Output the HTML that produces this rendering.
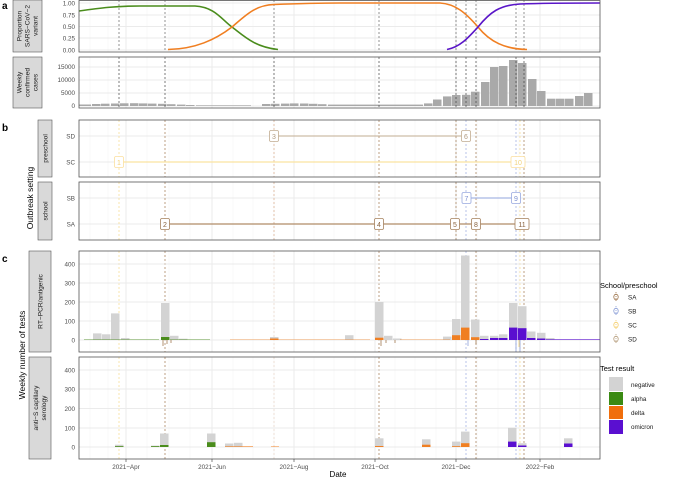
<!DOCTYPE html>
<html><head><meta charset="utf-8"><style>
html,body{margin:0;padding:0;background:#fff;width:685px;height:479px;overflow:hidden}
svg{display:block;font-family:"Liberation Sans",sans-serif}
</style></head><body>
<svg width="685" height="479" viewBox="0 0 685 479" xmlns="http://www.w3.org/2000/svg">
<defs>
<g id="vgrid">
<g stroke="#ebebeb" stroke-width="1">
<line x1="126" x2="126" y1="-1000" y2="1000"/><line x1="212" x2="212" y1="-1000" y2="1000"/><line x1="294" x2="294" y1="-1000" y2="1000"/><line x1="375" x2="375" y1="-1000" y2="1000"/><line x1="456" x2="456" y1="-1000" y2="1000"/><line x1="540" x2="540" y1="-1000" y2="1000"/>
</g>
<g stroke="#f4f4f4" stroke-width="0.6">
<line x1="90" x2="90" y1="-1000" y2="1000"/><line x1="108" x2="108" y1="-1000" y2="1000"/><line x1="147" x2="147" y1="-1000" y2="1000"/><line x1="169" x2="169" y1="-1000" y2="1000"/><line x1="190" x2="190" y1="-1000" y2="1000"/><line x1="233" x2="233" y1="-1000" y2="1000"/><line x1="253" x2="253" y1="-1000" y2="1000"/><line x1="274" x2="274" y1="-1000" y2="1000"/><line x1="314" x2="314" y1="-1000" y2="1000"/><line x1="334" x2="334" y1="-1000" y2="1000"/><line x1="355" x2="355" y1="-1000" y2="1000"/><line x1="395" x2="395" y1="-1000" y2="1000"/><line x1="415" x2="415" y1="-1000" y2="1000"/><line x1="436" x2="436" y1="-1000" y2="1000"/><line x1="477" x2="477" y1="-1000" y2="1000"/><line x1="498" x2="498" y1="-1000" y2="1000"/><line x1="519" x2="519" y1="-1000" y2="1000"/><line x1="560" x2="560" y1="-1000" y2="1000"/><line x1="580" x2="580" y1="-1000" y2="1000"/>
</g>
</g>
<clipPath id="ca1"><rect x="79" y="0" width="521" height="52"/></clipPath>
<clipPath id="ca2"><rect x="79" y="57" width="521" height="51"/></clipPath>
<clipPath id="cb1"><rect x="79" y="120" width="521" height="57"/></clipPath>
<clipPath id="cb2"><rect x="79" y="182" width="521" height="58"/></clipPath>
<clipPath id="cc1"><rect x="79" y="251" width="521" height="101"/></clipPath>
<clipPath id="cc2"><rect x="79" y="357" width="521" height="102"/></clipPath>
</defs>

<g font-weight="bold" font-size="10" fill="#000">
<text x="2" y="9">a</text><text x="2" y="131">b</text><text x="2" y="262">c</text>
</g>

<g clip-path="url(#ca1)"><use href="#vgrid"/>
<g stroke="#ebebeb"><line x1="79" x2="600" y1="3" y2="3"/><line x1="79" x2="600" y1="15" y2="15"/><line x1="79" x2="600" y1="26.5" y2="26.5"/><line x1="79" x2="600" y1="38" y2="38"/><line x1="79" x2="600" y1="50" y2="50"/></g>
<g stroke="#666" stroke-width="0.7" stroke-dasharray="2,2">
<line x1="119" x2="119" y1="0" y2="52"/><line x1="165" x2="165" y1="0" y2="52"/><line x1="274" x2="274" y1="0" y2="52"/><line x1="379" x2="379" y1="0" y2="52"/><line x1="456" x2="456" y1="0" y2="52"/><line x1="466" x2="466" y1="0" y2="52"/><line x1="476" x2="476" y1="0" y2="52"/><line x1="516" x2="516" y1="0" y2="52"/><line x1="524" x2="524" y1="0" y2="52"/></g>
<g fill="none" stroke-width="1.6">
<path d="M79,11 C100,8 115,6 140,6 L195,6 C215,7 222,20 232,27 C245,37 255,47 278,49.5" stroke="#4a8c1c"/>
<path d="M168,49.5 C195,49 215,40 232,27 C245,16 255,5 274,4.5 C300,3.5 320,3 340,3 L440,3 C455,4 465,12 478,27 C490,42 505,49 527,49.5" stroke="#f07f22"/>
<path d="M447,49.5 C460,47 468,38 478,27 C490,12 500,5 520,4 C545,3 570,3 600,3" stroke="#5a16c8"/>
</g></g>
<rect x="79" y="0.5" width="521" height="51.5" fill="none" stroke="#555" stroke-width="0.8"/>
<g font-size="6.3" fill="#4d4d4d" text-anchor="end">
<text x="75" y="5.5">1.00</text><text x="75" y="17.5">0.75</text><text x="75" y="29">0.50</text><text x="75" y="40.5">0.25</text><text x="75" y="52.5">0.00</text>
<text x="75" y="69">15000</text><text x="75" y="82">10000</text><text x="75" y="95">5000</text><text x="75" y="108">0</text>
</g>
<rect x="13" y="0" width="29" height="52" fill="#d9d9d9" stroke="#555" stroke-width="0.6"/>
<text transform="translate(27.5,26) rotate(-90)" font-size="6.6" fill="#1a1a1a" text-anchor="middle"><tspan x="0" y="-6">Proportion</tspan><tspan x="0" y="2">SARS−CoV−2</tspan><tspan x="0" y="10">variant</tspan></text>

<g clip-path="url(#ca2)"><use href="#vgrid"/>
<g stroke="#ebebeb"><line x1="79" x2="600" y1="67" y2="67"/><line x1="79" x2="600" y1="80" y2="80"/><line x1="79" x2="600" y1="93" y2="93"/><line x1="79" x2="600" y1="106" y2="106"/></g>
<g fill="#a9a9a9">
<rect x="79" y="104.5" width="12" height="1.5"/><rect x="92" y="104" width="8.5" height="2"/><rect x="101" y="103.7" width="8.5" height="2.3"/><rect x="111" y="103.5" width="8.5" height="2.5"/><rect x="120" y="103.3" width="8.5" height="2.7"/><rect x="130" y="103.2" width="8.5" height="2.8"/><rect x="139" y="103.4" width="8.5" height="2.6"/><rect x="148" y="103.6" width="8.5" height="2.4"/><rect x="158" y="103.8" width="8.5" height="2.2"/><rect x="167" y="104.2" width="8.5" height="1.8"/><rect x="177" y="104.6" width="8.5" height="1.4"/><rect x="186" y="105" width="8.5" height="1"/><rect x="196" y="105.3" width="55" height="0.7"/>
<rect x="262" y="104" width="8.5" height="2"/><rect x="271" y="103.8" width="8.5" height="2.2"/><rect x="281" y="103.6" width="8.5" height="2.4"/><rect x="290" y="103.4" width="8.5" height="2.6"/><rect x="300" y="103.5" width="8.5" height="2.5"/><rect x="309" y="103.8" width="8.5" height="2.2"/><rect x="318" y="104.2" width="8.5" height="1.8"/><rect x="328" y="104.6" width="95" height="1.4"/>
<rect x="424" y="103.4" width="8.5" height="2.6"/><rect x="433" y="99.5" width="8.5" height="6.5"/><rect x="443" y="96.4" width="8.5" height="9.6"/><rect x="452" y="95" width="8.5" height="11"/><rect x="462" y="94.8" width="8.5" height="11.2"/><rect x="471" y="91.7" width="8.5" height="14.3"/><rect x="481" y="82" width="8.5" height="24"/><rect x="490" y="67" width="8.5" height="39"/><rect x="499" y="66" width="8.5" height="40"/><rect x="509" y="60" width="8.5" height="46"/><rect x="518" y="63" width="8.5" height="43"/><rect x="528" y="79" width="8.5" height="27"/><rect x="537" y="91" width="8.5" height="15"/><rect x="547" y="98.7" width="8.5" height="7.3"/><rect x="556" y="98.7" width="8.5" height="7.3"/><rect x="565" y="98.7" width="8.5" height="7.3"/><rect x="575" y="96" width="8.5" height="10"/><rect x="584" y="93" width="8.5" height="13"/>
</g>
<g stroke="#444" stroke-width="0.7" stroke-dasharray="2,2">
<line x1="119" x2="119" y1="57" y2="108"/><line x1="165" x2="165" y1="57" y2="108"/><line x1="274" x2="274" y1="57" y2="108"/><line x1="379" x2="379" y1="57" y2="108"/><line x1="456" x2="456" y1="57" y2="108"/><line x1="466" x2="466" y1="57" y2="108"/><line x1="476" x2="476" y1="57" y2="108"/><line x1="516" x2="516" y1="57" y2="108"/><line x1="524" x2="524" y1="57" y2="108"/></g>
</g>
<rect x="79" y="57" width="521" height="51" fill="none" stroke="#555" stroke-width="0.8"/>
<rect x="13" y="57" width="29" height="51" fill="#d9d9d9" stroke="#555" stroke-width="0.6"/>
<text transform="translate(27.5,82.5) rotate(-90)" font-size="6.6" fill="#1a1a1a" text-anchor="middle"><tspan x="0" y="-6">Weekly</tspan><tspan x="0" y="2">confirmed</tspan><tspan x="0" y="10">cases</tspan></text>

<text transform="translate(33,198) rotate(-90)" font-size="8.5" fill="#000" text-anchor="middle">Outbreak setting</text>
<g clip-path="url(#cb1)"><use href="#vgrid"/>
<g stroke="#ebebeb"><line x1="79" x2="600" y1="136" y2="136"/><line x1="79" x2="600" y1="162" y2="162"/></g>
</g>
<g clip-path="url(#cb2)"><use href="#vgrid"/>
<g stroke="#ebebeb"><line x1="79" x2="600" y1="198" y2="198"/><line x1="79" x2="600" y1="224" y2="224"/></g>
</g>
<g stroke-width="0.7" stroke-dasharray="2,2">
<g stroke="#f5d98a"><line x1="119" x2="119" y1="120" y2="177"/><line x1="119" x2="119" y1="182" y2="240"/><line x1="520" x2="520" y1="120" y2="177"/><line x1="520" x2="520" y1="182" y2="240"/><line x1="119" x2="119" y1="251" y2="352"/><line x1="119" x2="119" y1="357" y2="459"/><line x1="520" x2="520" y1="251" y2="352"/><line x1="520" x2="520" y1="357" y2="459"/></g>
<g stroke="#a07850"><line x1="165" x2="165" y1="120" y2="177"/><line x1="165" x2="165" y1="182" y2="240"/><line x1="379" x2="379" y1="120" y2="177"/><line x1="379" x2="379" y1="182" y2="240"/><line x1="456" x2="456" y1="120" y2="177"/><line x1="456" x2="456" y1="182" y2="240"/><line x1="476" x2="476" y1="120" y2="177"/><line x1="476" x2="476" y1="182" y2="240"/><line x1="524" x2="524" y1="120" y2="177"/><line x1="524" x2="524" y1="182" y2="240"/>
<line x1="165" x2="165" y1="251" y2="352"/><line x1="165" x2="165" y1="357" y2="459"/><line x1="379" x2="379" y1="251" y2="352"/><line x1="379" x2="379" y1="357" y2="459"/><line x1="456" x2="456" y1="251" y2="352"/><line x1="456" x2="456" y1="357" y2="459"/><line x1="476" x2="476" y1="251" y2="352"/><line x1="476" x2="476" y1="357" y2="459"/><line x1="524" x2="524" y1="251" y2="352"/><line x1="524" x2="524" y1="357" y2="459"/></g>
<g stroke="#d8a888"><line x1="274" x2="274" y1="120" y2="177"/><line x1="274" x2="274" y1="182" y2="240"/><line x1="274" x2="274" y1="251" y2="352"/><line x1="274" x2="274" y1="357" y2="459"/></g>
<g stroke="#9aaae0"><line x1="466" x2="466" y1="120" y2="177"/><line x1="466" x2="466" y1="182" y2="240"/><line x1="516" x2="516" y1="120" y2="177"/><line x1="516" x2="516" y1="182" y2="240"/><line x1="466" x2="466" y1="251" y2="352"/><line x1="466" x2="466" y1="357" y2="459"/><line x1="516" x2="516" y1="251" y2="352"/><line x1="516" x2="516" y1="357" y2="459"/></g>
</g>
<line x1="274" x2="466" y1="136" y2="136" stroke="#c2ad92" stroke-width="1"/>
<line x1="119" x2="518" y1="162" y2="162" stroke="#fbe3a0" stroke-width="1.2"/>
<line x1="467" x2="516" y1="198" y2="198" stroke="#a8b6e4" stroke-width="1.2"/>
<line x1="165" x2="522" y1="224" y2="224" stroke="#b08c68" stroke-width="1.2"/>
<g font-size="7" text-anchor="middle">
<g fill="#fff" stroke="#c2ad92" stroke-width="0.8"><rect x="269.5" y="130.5" width="9" height="11" rx="1.5"/><rect x="461.5" y="130.5" width="9" height="11" rx="1.5"/></g>
<g fill="#b09a80"><text x="274" y="139">3</text><text x="466" y="139">6</text></g>
<g fill="#fff" stroke="#fbe0a0" stroke-width="0.8"><rect x="114.5" y="156.5" width="9" height="11" rx="1.5"/><rect x="511" y="156.5" width="14" height="11" rx="1.5"/></g>
<g fill="#f2d27a"><text x="119" y="165">1</text><text x="518" y="165">10</text></g>
<g fill="#fff" stroke="#9aaae0" stroke-width="0.8"><rect x="462" y="192.5" width="9" height="11" rx="1.5"/><rect x="511.5" y="192.5" width="9" height="11" rx="1.5"/></g>
<g fill="#7d90d0"><text x="466.5" y="201">7</text><text x="516" y="201">9</text></g>
<g fill="#fff" stroke="#a6825e" stroke-width="0.8"><rect x="160.5" y="218.5" width="9" height="11" rx="1.5"/><rect x="374.5" y="218.5" width="9" height="11" rx="1.5"/><rect x="450.5" y="218.5" width="9" height="11" rx="1.5"/><rect x="471.5" y="218.5" width="9" height="11" rx="1.5"/><rect x="515" y="218.5" width="14" height="11" rx="1.5"/></g>
<g fill="#8a6440"><text x="165" y="227">2</text><text x="379" y="227">4</text><text x="455" y="227">5</text><text x="476" y="227">8</text><text x="522" y="227">11</text></g>
</g>
<rect x="79" y="120" width="521" height="57" fill="none" stroke="#555" stroke-width="0.8"/>
<rect x="79" y="182" width="521" height="58" fill="none" stroke="#555" stroke-width="0.8"/>
<g font-size="6.3" fill="#4d4d4d" text-anchor="end">
<text x="75" y="138.5">SD</text><text x="75" y="164.5">SC</text><text x="75" y="200.5">SB</text><text x="75" y="226.5">SA</text></g>
<rect x="38" y="120" width="14" height="57" fill="#d9d9d9" stroke="#555" stroke-width="0.6"/>
<rect x="38" y="182" width="14" height="58" fill="#d9d9d9" stroke="#555" stroke-width="0.6"/>
<text transform="translate(47.5,148.5) rotate(-90)" font-size="6.6" fill="#1a1a1a" text-anchor="middle">preschool</text>
<text transform="translate(47.5,211) rotate(-90)" font-size="6.6" fill="#1a1a1a" text-anchor="middle">school</text>

<text transform="translate(25,355) rotate(-90)" font-size="8.5" fill="#000" text-anchor="middle">Weekly number of tests</text>
<g clip-path="url(#cc1)"><use href="#vgrid"/>
<g stroke="#ebebeb"><line x1="79" x2="600" y1="264" y2="264"/><line x1="79" x2="600" y1="283" y2="283"/><line x1="79" x2="600" y1="302" y2="302"/><line x1="79" x2="600" y1="321" y2="321"/><line x1="79" x2="600" y1="340" y2="340"/></g>
<g fill="#d3d3d3">
<rect x="93" y="333.4" width="8.5" height="6.6"/><rect x="102" y="334.3" width="8.5" height="5.7"/><rect x="111" y="313.4" width="8.5" height="26.6"/><rect x="121" y="338" width="8.5" height="2"/>
<rect x="161" y="303" width="8.5" height="37"/><rect x="170" y="335.8" width="8.5" height="4.2"/><rect x="179" y="338.7" width="8.5" height="1.3"/>
<rect x="270" y="337" width="8.5" height="3"/><rect x="345" y="335.2" width="8.5" height="4.8"/>
<rect x="375" y="302" width="8.5" height="38"/><rect x="384" y="335.8" width="8.5" height="4.2"/><rect x="393" y="338.5" width="8.5" height="1.5"/>
<rect x="443" y="336.6" width="8.5" height="3.4"/><rect x="452" y="319" width="8.5" height="21"/><rect x="461" y="255.5" width="8.5" height="84.5"/><rect x="471" y="319.5" width="8.5" height="20.5"/><rect x="480" y="335.8" width="8.5" height="4.2"/><rect x="490" y="335.8" width="8.5" height="4.2"/><rect x="499" y="334.3" width="8.5" height="5.7"/><rect x="509" y="303" width="8.5" height="37"/><rect x="518" y="306.2" width="8.5" height="33.8"/><rect x="527" y="331.5" width="8.5" height="8.5"/><rect x="537" y="332.8" width="8.5" height="7.2"/><rect x="546" y="338" width="8.5" height="2"/>
</g>
<g fill="#4a8c1c"><rect x="84" y="339.3" width="75" height="0.7" opacity="0.6"/><rect x="161" y="337" width="8.5" height="3"/><rect x="170" y="339.3" width="40" height="0.7" opacity="0.6"/></g>
<g fill="#f07f22"><rect x="230" y="339.3" width="140" height="0.7" opacity="0.5"/><rect x="270" y="338.5" width="8.5" height="1.5"/><rect x="375" y="337.7" width="8.5" height="2.3"/><rect x="400" y="339.3" width="50" height="0.7" opacity="0.5"/><rect x="452" y="335.2" width="8.5" height="4.8"/><rect x="461" y="327.6" width="8.5" height="12.4"/><rect x="471" y="337.2" width="8.5" height="2.8"/></g>
<g fill="#5a0fd0"><rect x="480" y="339" width="8.5" height="1"/><rect x="490" y="338" width="8.5" height="2"/><rect x="499" y="338" width="8.5" height="2"/><rect x="509" y="327.6" width="8.5" height="12.4"/><rect x="518" y="328.2" width="8.5" height="11.8"/><rect x="527" y="338" width="8.5" height="2"/><rect x="537" y="338.5" width="8.5" height="1.5"/><rect x="546" y="339" width="54" height="1" opacity="0.6"/></g>
<g stroke-width="0.8">
<g stroke="#a07850"><line x1="163" x2="163" y1="340" y2="346"/><line x1="167" x2="167" y1="340" y2="344"/><line x1="171" x2="171" y1="340" y2="343"/><line x1="381" x2="381" y1="340" y2="346"/><line x1="386" x2="386" y1="340" y2="343"/><line x1="395" x2="395" y1="340" y2="343"/><line x1="476" x2="476" y1="340" y2="344"/></g>
<g stroke="#8da0d8"><line x1="468" x2="468" y1="340" y2="346"/><line x1="516" x2="516" y1="340" y2="352"/><line x1="520" x2="520" y1="340" y2="352"/></g>
<g stroke="#f5d070"><line x1="519" x2="519" y1="340" y2="347"/></g>
</g>
</g>
<g clip-path="url(#cc2)"><use href="#vgrid"/>
<g stroke="#ebebeb"><line x1="79" x2="600" y1="370" y2="370"/><line x1="79" x2="600" y1="389" y2="389"/><line x1="79" x2="600" y1="408.5" y2="408.5"/><line x1="79" x2="600" y1="428" y2="428"/><line x1="79" x2="600" y1="447" y2="447"/></g>
<g fill="#d3d3d3">
<rect x="115" y="444.7" width="8.5" height="2.3"/><rect x="151" y="445.6" width="8.5" height="1.4"/><rect x="160" y="433.5" width="8.5" height="13.5"/><rect x="207" y="433.5" width="8.5" height="13.5"/><rect x="225" y="443.5" width="8.5" height="3.5"/><rect x="234" y="442.8" width="8.5" height="4.2"/>
<rect x="375" y="438.3" width="8.5" height="8.7"/><rect x="422" y="439.3" width="8.5" height="7.7"/><rect x="452" y="441.6" width="8.5" height="5.4"/><rect x="461" y="431.6" width="8.5" height="15.4"/><rect x="508" y="427.8" width="8.5" height="19.2"/><rect x="518" y="443.2" width="8.5" height="3.8"/><rect x="564" y="438.3" width="8.5" height="8.7"/>
</g>
<g fill="#4a8c1c"><rect x="115" y="446.2" width="8.5" height="0.8"/><rect x="151" y="446.2" width="8.5" height="0.8"/><rect x="160" y="445" width="8.5" height="2"/><rect x="207" y="442.2" width="8.5" height="4.8"/></g>
<g fill="#f07f22"><rect x="225" y="446.4" width="28" height="0.6"/><rect x="271" y="446.5" width="8" height="0.5"/><rect x="375" y="446" width="8.5" height="1"/><rect x="422" y="444.7" width="8.5" height="2.3"/><rect x="452" y="446.2" width="8.5" height="0.8"/><rect x="461" y="443.2" width="8.5" height="3.8"/></g>
<g fill="#5a0fd0"><rect x="508" y="441.6" width="8.5" height="5.4"/><rect x="518" y="445.5" width="8.5" height="1.5"/><rect x="564" y="443.5" width="8.5" height="3.5"/></g>
</g>
<rect x="79" y="251" width="521" height="101" fill="none" stroke="#555" stroke-width="0.8"/>
<rect x="79" y="357" width="521" height="102" fill="none" stroke="#555" stroke-width="0.8"/>
<g font-size="6.3" fill="#4d4d4d" text-anchor="end">
<text x="75" y="266.5">400</text><text x="75" y="285.5">300</text><text x="75" y="304.5">200</text><text x="75" y="323.5">100</text><text x="75" y="342.5">0</text>
<text x="75" y="372.5">400</text><text x="75" y="391.5">300</text><text x="75" y="411">200</text><text x="75" y="430.5">100</text><text x="75" y="449.5">0</text>
</g>
<rect x="29" y="251" width="22" height="101" fill="#d9d9d9" stroke="#555" stroke-width="0.6"/>
<rect x="29" y="357" width="22" height="102" fill="#d9d9d9" stroke="#555" stroke-width="0.6"/>
<text transform="translate(42.5,301.5) rotate(-90)" font-size="6.6" fill="#1a1a1a" text-anchor="middle">RT−PCR/antigenic</text>
<text transform="translate(40,408) rotate(-90)" font-size="6.6" fill="#1a1a1a" text-anchor="middle"><tspan x="0" y="-2">anti−S capillary</tspan><tspan x="0" y="6">serology</tspan></text>
<g stroke="#333" stroke-width="0.6"><line x1="126" x2="126" y1="459" y2="462"/><line x1="212" x2="212" y1="459" y2="462"/><line x1="294" x2="294" y1="459" y2="462"/><line x1="375" x2="375" y1="459" y2="462"/><line x1="456" x2="456" y1="459" y2="462"/><line x1="540" x2="540" y1="459" y2="462"/></g>
<g font-size="6.3" fill="#4d4d4d" text-anchor="middle">
<text x="126" y="469">2021−Apr</text><text x="212" y="469">2021−Jun</text><text x="294" y="469">2021−Aug</text><text x="375" y="469">2021−Oct</text><text x="456" y="469">2021−Dec</text><text x="540" y="469">2022−Feb</text></g>
<text x="338" y="477" font-size="8" fill="#000" text-anchor="middle">Date</text>

<text x="600" y="288" font-size="7.5" fill="#000">School/preschool</text>
<g fill="none" stroke-width="0.8">
<g stroke="#a07850"><ellipse cx="616" cy="297" rx="2.2" ry="2.8"/><line x1="616" x2="616" y1="292" y2="302" stroke-dasharray="1,1"/></g>
<g stroke="#8da0d8"><ellipse cx="616" cy="311" rx="2.2" ry="2.8"/><line x1="616" x2="616" y1="306" y2="316" stroke-dasharray="1,1"/></g>
<g stroke="#f5d070"><ellipse cx="616" cy="325" rx="2.2" ry="2.8"/><line x1="616" x2="616" y1="320" y2="330" stroke-dasharray="1,1"/></g>
<g stroke="#b8a080"><ellipse cx="616" cy="339" rx="2.2" ry="2.8"/><line x1="616" x2="616" y1="334" y2="344" stroke-dasharray="1,1"/></g>
</g>
<g font-size="6.3" fill="#1a1a1a">
<text x="628" y="299.5">SA</text><text x="628" y="313.5">SB</text><text x="628" y="327.5">SC</text><text x="628" y="341.5">SD</text></g>
<text x="600" y="371" font-size="7.5" fill="#000">Test result</text>
<rect x="609" y="377" width="14" height="14" fill="#d3d3d3"/>
<rect x="609" y="392" width="14" height="13" fill="#3a8a13"/>
<rect x="609" y="406" width="14" height="13" fill="#f06e0c"/>
<rect x="609" y="420" width="14" height="14" fill="#5a0fd0"/>
<g font-size="6.3" fill="#1a1a1a">
<text x="631" y="387">negative</text><text x="631" y="401">alpha</text><text x="631" y="415">delta</text><text x="631" y="429">omicron</text></g>
</svg>
</body></html>
